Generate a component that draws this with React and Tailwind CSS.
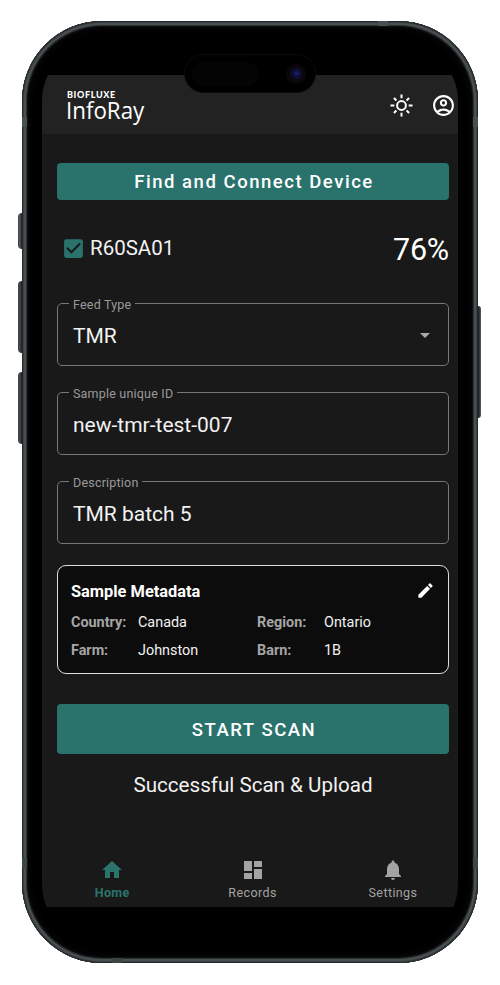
import React from 'react'
import {
  MdArrowDropDown,
  MdCheckBox,
  MdDashboard,
  MdEdit,
  MdHome,
  MdNotifications,
  MdOutlineAccountCircle,
} from 'react-icons/md'

function SunIcon({ className }) {
  return (
    <svg viewBox="0 0 24 24" className={className} fill="none" stroke="currentColor" strokeWidth="2.1">
      <circle cx="12" cy="12" r="4.6" />
      <path d="M12 .5v4M12 19.5v4M.5 12h4M19.5 12h4M4.1 4.1l2.6 2.6M17.3 17.3l2.6 2.6M4.1 19.9l2.6-2.6M17.3 6.7l2.6-2.6" />
    </svg>
  )
}

function Field({ label, value, select }) {
  return (
    <fieldset className="h-[71px] rounded-[5px] border border-[#777] px-[11px]">
      <legend className="h-[17px] px-1 pt-px text-[12.5px] leading-[17px] tracking-[0.2px] text-[#999]">{label}</legend>
      <div className="flex h-[47px] items-center justify-between pl-1">
        <span className="text-[21px] leading-6 text-[#f2f2f2]">{value}</span>
        {select && <MdArrowDropDown className="mb-0.5 size-6 text-[#aaa]" />}
      </div>
    </fieldset>
  )
}

function Meta({ label, value }) {
  return (
    <div className="flex text-[14.4px] leading-5">
      <span className="w-[67px] font-bold text-[#a5a5a5]">{label}</span>
      <span className="text-[#f2f2f2]">{value}</span>
    </div>
  )
}

function Tab({ icon: Icon, label, active }) {
  return (
    <div className={active ? 'flex w-[140.4px] shrink-0 flex-col items-center text-[#2a746d]' : 'flex w-[140.4px] shrink-0 flex-col items-center text-[#a3a3a3]'}>
      <Icon className="size-6" />
      <span className={active ? 'mt-[3px] text-[12.5px] leading-4 font-bold tracking-[0.4px]' : 'mt-[3px] text-[12.5px] leading-4 tracking-[0.4px]'}>{label}</span>
    </div>
  )
}

// Hardware bits that sit on top of the phone's edge
function PhoneHardware() {
  return (
    <>
      <div className="absolute top-[192px] -left-[4px] h-9 w-1 rounded-l-sm bg-linear-to-r from-[#3a3f41] via-[#555b5e] to-[#15181a]" />
      <div className="absolute top-[260px] -left-[4px] h-[72px] w-1 rounded-l-sm bg-linear-to-r from-[#3a3f41] via-[#454b4d] to-[#15181a]" />
      <div className="absolute top-[351px] -left-[4px] h-[72px] w-1 rounded-l-sm bg-linear-to-r from-[#3a3f41] via-[#454b4d] to-[#15181a]" />
      <div className="absolute top-[285px] -right-[3px] h-[112px] w-[3px] rounded-r-sm bg-linear-to-r from-[#15181a] to-[#5a6062]" />
      <div className="absolute top-[96px] left-0 h-[10px] w-[5px] bg-[#4a4f51]" />
      <div className="absolute top-[96px] right-0 h-[10px] w-[5px] bg-[#4a4f51]" />
      <div className="absolute top-[837px] left-0 h-[10px] w-[5px] bg-[#3f4445]" />
      <div className="absolute top-[837px] right-0 h-[10px] w-[5px] bg-[#3f4445]" />
      <div className="absolute top-0 left-[356px] h-[5px] w-[10px] bg-[#4a4f51]" />
      <div className="absolute bottom-0 left-[90px] h-[5px] w-[10px] bg-[#3f4445]" />
      <div className="absolute top-[33px] left-[162px] flex h-[39px] w-[132px] items-center justify-end rounded-full border border-[#0b0b0b] bg-black pr-[9px]">
        <div className="mr-[27px] h-[24px] w-[67px] rounded-full bg-[#040404]" />
        <div className="flex size-5 items-center justify-center rounded-full bg-[#0a060b]">
          <div className="flex size-[11px] items-center justify-center rounded-full border border-[#14163a] bg-[#0b0c2c]">
            <div className="size-[5px] rounded-full bg-[#171c62]" />
          </div>
        </div>
      </div>
    </>
  )
}

export default function App() {
  return (
    <div className="flex h-[985px] w-[500px] justify-center overflow-hidden bg-white pt-[21px] font-['Roboto',sans-serif]">
      <div className="relative h-[942px] w-[456px] rounded-[80px] bg-black px-5 py-[21px] shadow-[inset_0_0_0_1px_#262a2c,inset_0_0_0_2px_#3c4143,inset_0_0_0_4px_#4a4f51,inset_0_0_0_5px_#2a2d2e,inset_0_0_0_6px_#101112,inset_0_0_8px_6px_#0c0c0c]">
        <div className="flex h-[901px] w-[416px] flex-col overflow-hidden rounded-[59px] bg-black pt-[33px] pb-9">
          <header className="flex h-[59px] shrink-0 items-center justify-between bg-[#222] pt-px pr-[3px] pl-6">
            <div className="flex flex-col text-white">
              <span className="mt-px pl-px font-['Lato',sans-serif] text-[9px] leading-[10px] font-black tracking-[0.65px]">BIOFLUXE</span>
              <span className="-mt-px origin-left scale-x-[0.93] font-['Open_Sans',sans-serif] text-[24px] leading-[22px]">InfoRay</span>
            </div>
            <div className="flex items-center gap-[18px] text-white">
              <SunIcon className="size-[23px]" />
              <MdOutlineAccountCircle className="size-[25px] -mr-px" />
            </div>
          </header>

          <main className="flex flex-1 flex-col bg-[#191919] pt-[28.5px] pr-[9px] pl-[15px]">
            <button className="h-[37.5px] rounded-[4px] bg-[#2a736d] pt-[3px] pl-[2px] text-[18.5px] font-medium tracking-[1.53px] text-white">
              Find and Connect Device
            </button>

            <div className="mt-[30px] flex h-9 items-center justify-between pl-1">
              <div className="flex items-center gap-1">
                <MdCheckBox className="size-[25px] text-[#2a736d]" />
                <span className="pt-px text-[20.5px] text-[#f2f2f2]">R60SA01</span>
              </div>
              <span className="pt-[3px] text-[30.5px] leading-9 tracking-[-0.2px] text-white">76%</span>
            </div>

            <div className="mt-[29px] flex flex-col gap-[18px]">
              <Field label="Feed Type" value="TMR" select />
              <Field label="Sample unique ID" value="new-tmr-test-007" />
              <Field label="Description" value="TMR batch 5" />
            </div>

            <section className="mt-[21px] h-[109px] rounded-[9px] border border-[#ddd] bg-[#0c0c0c] pt-4 pr-[13px] pl-[13px]">
              <div className="flex h-5 items-center justify-between">
                <h2 className="text-[16.4px] font-bold text-white">Sample Metadata</h2>
                <MdEdit className="mb-[3px] size-[19px] text-white" />
              </div>
              <div className="mt-[11px] grid grid-cols-[186px_1fr] gap-y-2">
                <Meta label="Country:" value="Canada" />
                <Meta label="Region:" value="Ontario" />
                <Meta label="Farm:" value="Johnston" />
                <Meta label="Barn:" value="1B" />
              </div>
            </section>

            <button className="mt-[30px] h-[50px] rounded-[4px] bg-[#2a736d] pt-[3px] pl-[2px] text-[18.5px] font-medium tracking-[1.55px] text-white">
              START SCAN
            </button>
            <p className="mt-[18px] text-center text-[20.6px] leading-[26px] text-[#f2f2f2]">Successful Scan &amp; Upload</p>
          </main>

          <nav className="flex h-[50px] shrink-0 bg-[#191919] pt-px">
            <Tab icon={MdHome} label="Home" active />
            <Tab icon={MdDashboard} label="Records" />
            <Tab icon={MdNotifications} label="Settings" />
          </nav>
        </div>
        <PhoneHardware />
      </div>
    </div>
  )
}
